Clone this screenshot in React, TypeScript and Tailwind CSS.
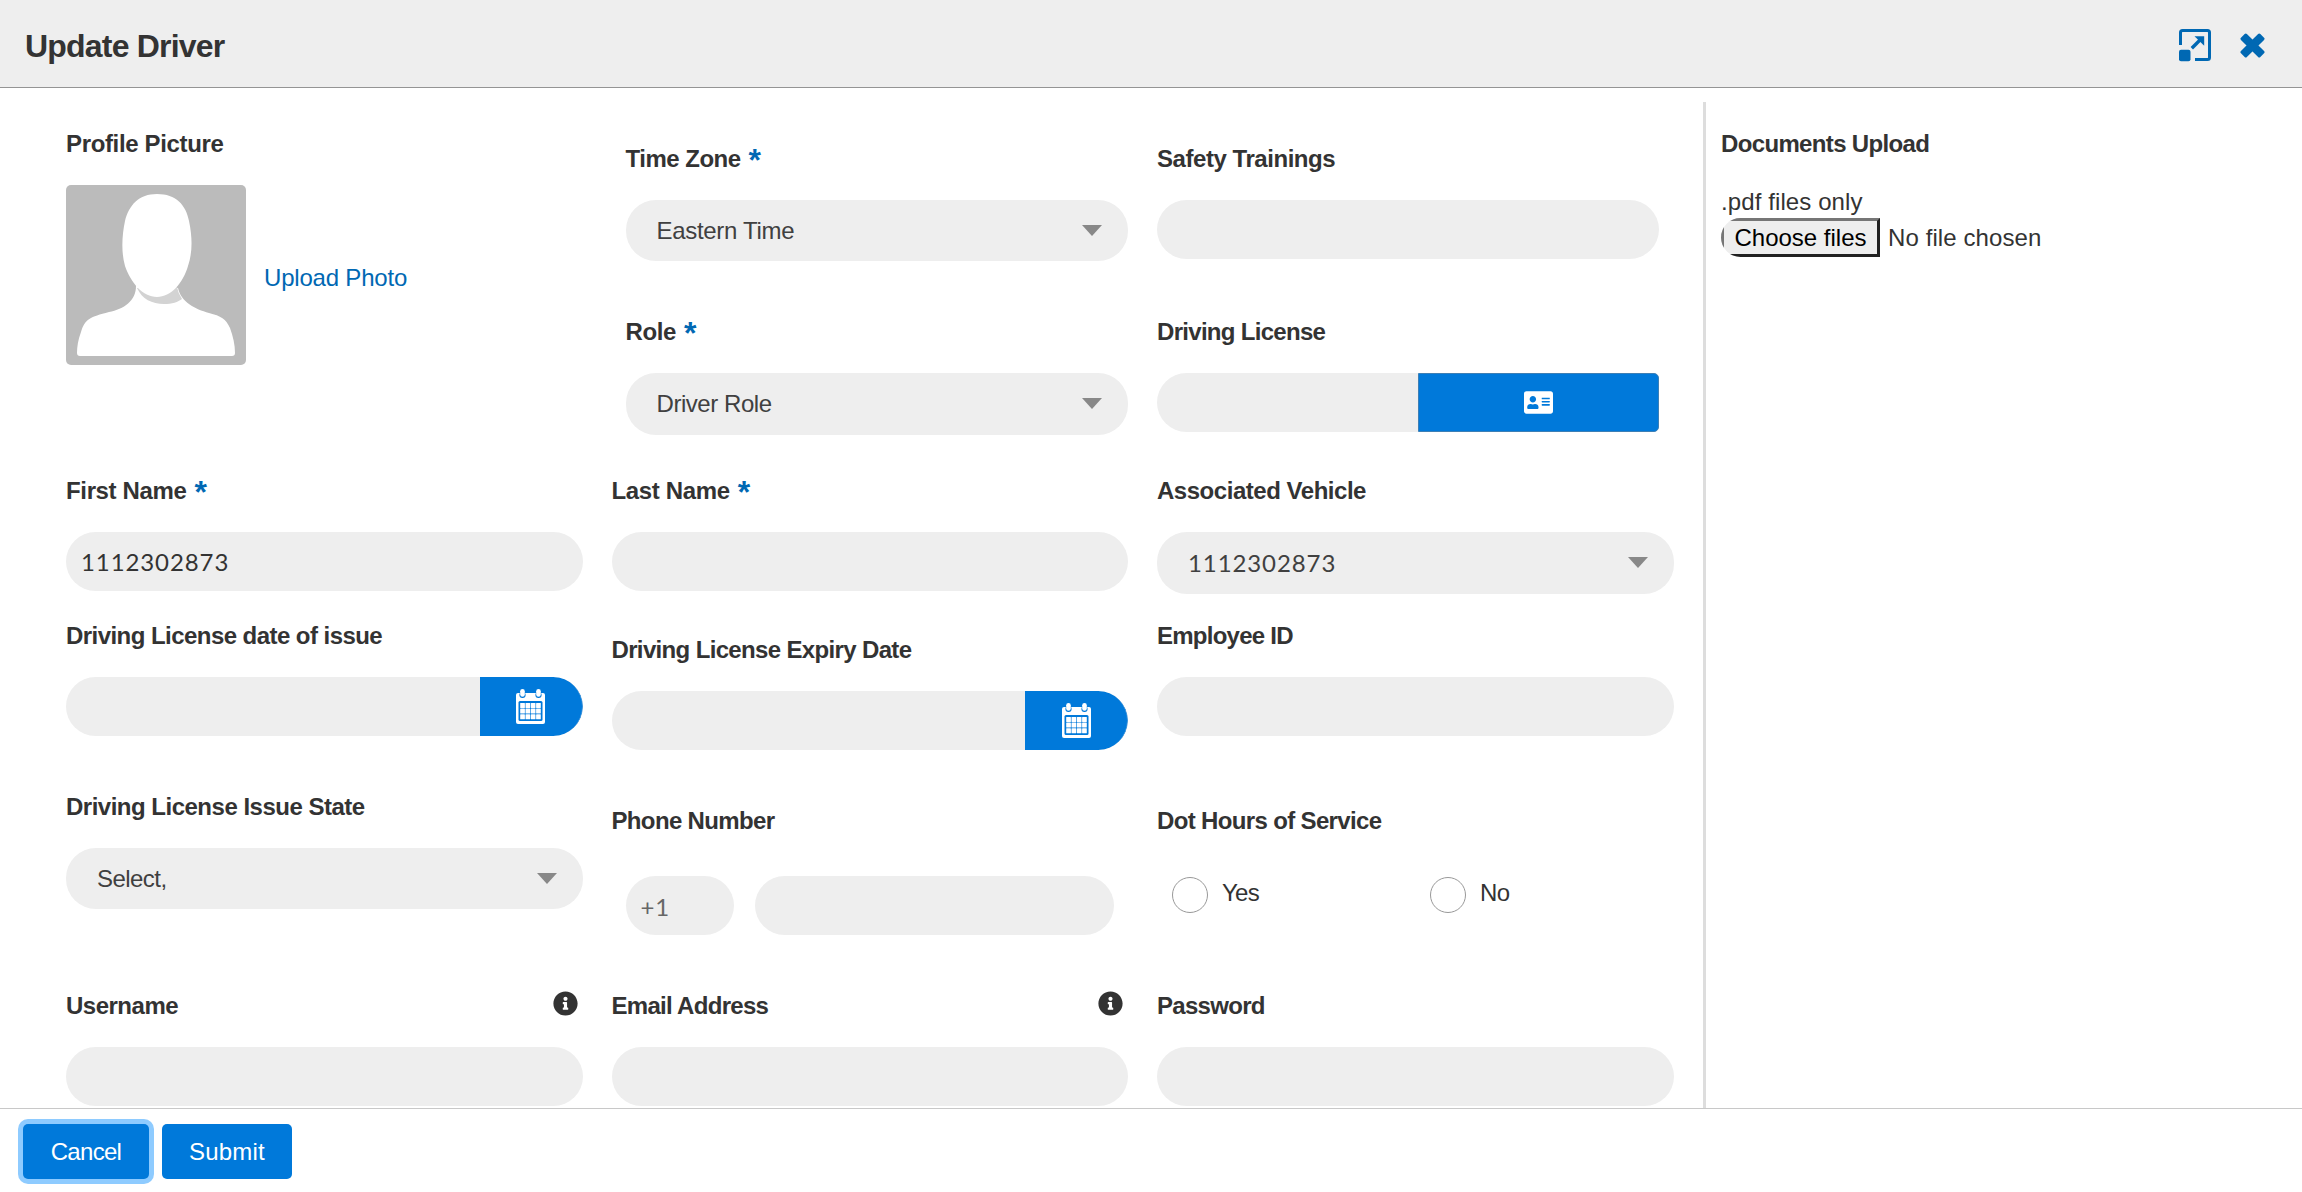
import type { ReactNode } from 'react'
import { FaAddressCard, FaInfoCircle } from 'react-icons/fa'

const inputClass = 'block w-full h-[59px] rounded-[30px] bg-[#eeeeee] px-[15px] text-[24px] text-[#333333] outline-none'

function Label({ children, required, tracking = 'tracking-[-0.35px]' }: { children: ReactNode, required?: boolean, tracking?: string }) {
    return (
        <label className={`block h-[30px] mb-[26px] text-[24px] leading-[30px] font-bold whitespace-nowrap ${tracking}`}>
            {children}
            {required && <span className="relative top-[4px] ml-[8px] text-[#0068b3] text-[32px] leading-[20px]">*</span>}
        </label>
    )
}

function Select({ value, className = 'h-[61px]', textClassName = 'tracking-[-0.55px]' }: { value: string, className?: string, textClassName?: string }) {
    return (
        <div className={`flex items-center justify-between rounded-[30px] bg-[#eeeeee] pl-[31px] pr-[26px] ${className}`}>
            <span className={`text-[24px] leading-[30px] text-[#404040] ${textClassName}`}>{value}</span>
            <svg className="mb-[1px]" width="20" height="11" viewBox="0 0 20 11"><path d="M0 0h20L10 11z" fill="#888888" /></svg>
        </div>
    )
}

function CalendarIcon() {
    return (
        <svg width="31" height="35" viewBox="0 0 31 35">
            <rect x="1" y="4" width="29" height="31" rx="2" fill="#fff" />
            <rect x="4.4" y="3" width="6.2" height="6" rx="3" fill="#0079da" />
            <rect x="20.4" y="3" width="6.2" height="6" rx="3" fill="#0079da" />
            <rect x="5.2" y="0" width="4.6" height="7.8" rx="2.3" fill="#fff" />
            <rect x="21.2" y="0" width="4.6" height="7.8" rx="2.3" fill="#fff" />
            <rect x="3.5" y="12" width="24" height="20" rx="1.5" fill="#0079da" />
            {[13.9, 19.6, 25.3].map((y) => [5.2, 10.5, 15.8, 21.1].map((x) => (
                <rect key={`${x}-${y}`} x={x} y={y} width="4.7" height="5" rx="0.5" fill="#fff" />
            )))}
        </svg>
    )
}

function DateInput() {
    return (
        <div className="flex h-[59px] rounded-[30px] overflow-hidden bg-[#eeeeee]">
            <input className="flex-1 min-w-0 bg-transparent px-4 outline-none" />
            <button className="w-[103px] rounded-r-[30px] bg-[#0079da] border-r border-[#3d93da] flex items-center justify-center">
                <CalendarIcon />
            </button>
        </div>
    )
}

function Radio({ label }: { label: string }) {
    return (
        <div className="flex w-[258px] shrink-0">
            <span className="w-9 h-9 rounded-full border border-[#999999] mr-[14px]"></span>
            <span className="text-[24px] leading-[30px] mt-[1px] tracking-[-0.7px]">{label}</span>
        </div>
    )
}

function Avatar() {
    return (
        <svg width="180" height="180" viewBox="0 0 180 180">
            <rect width="180" height="180" rx="5" fill="#bbbbbb" />
            <path d="M70 101C70 116 58 124 43 127C24 132 19 134 15 147C12 155 11 162 11 168Q11 171 14 171H166Q169 171 169 168C169 160 167 151 164 143C160 134 155 131 143 128C129 124 115 117 112 103Z" fill="#fff" />
            <path d="M71 103C76 114 86 119 98 119C106 119 112 117 116 114Q112 108 111 102Z" fill="#d3d3d3" />
            <path d="M91 9C110 9 120 20 123 36C127 55 126 69 122 81C117 98 105 112 91 112C77 112 65 98 59 81C55 67 56 50 59 36C63 20 73 9 91 9Z" fill="#fff" />
        </svg>
    )
}

function Header() {
    return (
        <div className="flex items-center h-[88px] shrink-0 bg-[#eeeeee] border-b border-[#949494] pl-[25px] pr-[37px]">
            <h1 className="flex-1 text-[32px] leading-[40px] mt-[4px] font-bold tracking-[-0.8px]">Update Driver</h1>
            <svg className="mt-[4px] mr-[28px]" width="33" height="33" viewBox="0 0 33 33">
                <path d="M1.5 16V3.5Q1.5 1.5 3.5 1.5H28.5Q30.5 1.5 30.5 3.5V28.5Q30.5 30.5 28.5 30.5H16" fill="none" stroke="#0068b3" strokeWidth="3" />
                <rect y="20.7" width="11.5" height="11.5" rx="2" fill="#0068b3" />
                <path d="M15.5 7.3H25.2V16.8Z" fill="#0068b3" />
                <path d="M12.8 19.2L22 10" stroke="#0068b3" strokeWidth="3.4" />
            </svg>
            <svg className="mt-[4px]" width="25" height="25" viewBox="0 0 25 25">
                <g fill="#0068b3">
                    <rect x="-1.2" y="8.3" width="27.4" height="8.4" rx="1.6" transform="rotate(45 12.5 12.5)" />
                    <rect x="-1.2" y="8.3" width="27.4" height="8.4" rx="1.6" transform="rotate(-45 12.5 12.5)" />
                </g>
            </svg>
        </div>
    )
}

export default function App() {
    return (
        <div className="flex flex-col w-full h-screen overflow-hidden bg-white text-[#333333] font-['Liberation_Sans',sans-serif]">
            <Header />

            <div className="flex flex-1 min-h-0 pt-[14px]">
                <div className="w-[1706px] shrink-0 border-r-[3px] border-[#dddddd] pl-[66px] pt-[27px] overflow-hidden">
                    <div className="grid grid-cols-[516.5px_516.5px_516.5px] grid-rows-[347px_145px_171px_199px_auto] gap-x-[29px]">
                        <div>
                            <Label>Profile Picture</Label>
                            <div className="flex items-center">
                                <Avatar />
                                <a className="ml-[18px] mt-[5px] text-[24px] leading-[30px] tracking-[-0.2px] text-[#0068b3]">Upload Photo</a>
                            </div>
                        </div>
                        <div className="pt-[15px] pl-[14px]">
                            <Label required tracking="tracking-[-0.5px]">Time Zone</Label>
                            <Select value="Eastern Time" textClassName="tracking-[-0.3px]" />
                            <div className="mt-[56px]">
                                <Label required>Role</Label>
                                <Select value="Driver Role" className="h-[62px]" textClassName="tracking-[-0.45px]" />
                            </div>
                        </div>
                        <div className="pt-[15px] pr-[15px]">
                            <Label tracking="tracking-[-0.45px]">Safety Trainings</Label>
                            <input className={inputClass} />
                            <div className="mt-[58px]">
                                <Label tracking="tracking-[-0.7px]">Driving License</Label>
                                <div className="flex h-[59px]">
                                    <input className="flex-1 min-w-0 rounded-l-[30px] bg-[#eeeeee] px-4 outline-none" />
                                    <button className="w-[241px] rounded-r-[5px] bg-[#0079da] border border-[#3d7fb5] text-white text-[29px] flex items-center justify-center">
                                        <FaAddressCard />
                                    </button>
                                </div>
                            </div>
                        </div>

                        <div>
                            <Label required>First Name</Label>
                            <input className={`${inputClass} font-[Lato] tracking-[0.9px]`} defaultValue="1112302873" />
                        </div>
                        <div>
                            <Label required>Last Name</Label>
                            <input className={inputClass} />
                        </div>
                        <div>
                            <Label tracking="tracking-[-0.47px]">Associated Vehicle</Label>
                            <Select value="1112302873" className="h-[62px]" textClassName="font-[Lato] tracking-[0.9px]" />
                        </div>

                        <div>
                            <Label tracking="tracking-[-0.55px]">Driving License date of issue</Label>
                            <DateInput />
                        </div>
                        <div className="pt-[14px]">
                            <Label tracking="tracking-[-0.65px]">Driving License Expiry Date</Label>
                            <DateInput />
                        </div>
                        <div>
                            <Label tracking="tracking-[-0.75px]">Employee ID</Label>
                            <input className={inputClass} />
                        </div>

                        <div>
                            <Label tracking="tracking-[-0.5px]">Driving License Issue State</Label>
                            <Select value="Select," />
                        </div>
                        <div className="pt-[14px]">
                            <Label tracking="tracking-[-0.65px]">Phone Number</Label>
                            <div className="flex gap-[21px] px-[14px] pt-[14px]">
                                <div className="w-[108px] h-[59px] rounded-[30px] bg-[#eeeeee] pl-[15px] pt-[2px] flex items-center text-[24px] font-[Lato] tracking-[0.9px] text-[#666666]">+1</div>
                                <input className="flex-1 min-w-0 h-[59px] rounded-[30px] bg-[#eeeeee] px-4 outline-none" />
                            </div>
                        </div>
                        <div className="pt-[14px]">
                            <Label tracking="tracking-[-0.65px]">Dot Hours of Service</Label>
                            <div className="flex pl-[15px] pt-[15px]">
                                <Radio label="Yes" />
                                <Radio label="No" />
                            </div>
                        </div>

                        <div>
                            <div className="flex justify-between pr-[5px]">
                                <Label tracking="tracking-[-0.5px]">Username</Label>
                                <FaInfoCircle className="text-[25px]" />
                            </div>
                            <input className={inputClass} />
                        </div>
                        <div>
                            <div className="flex justify-between pr-[5px]">
                                <Label tracking="tracking-[-0.7px]">Email Address</Label>
                                <FaInfoCircle className="text-[25px]" />
                            </div>
                            <input className={inputClass} />
                        </div>
                        <div>
                            <Label tracking="tracking-[-0.7px]">Password</Label>
                            <input className={inputClass} />
                        </div>
                    </div>
                </div>

                <div className="pl-[15px] pt-[27px]">
                    <Label tracking="tracking-[-0.65px]">Documents Upload</Label>
                    <div className="mt-[28px] text-[24px] leading-[30px] tracking-[0.1px]">.pdf files only</div>
                    <div className="flex items-center mt-[1px] text-[24px] tracking-[0.1px]">
                        <div className="mr-2 rounded-l-[22px] overflow-hidden">
                            <button className="block w-[159px] h-[39px] bg-[#eeeeee] border-[3px] border-t-[#767676] border-l-[#767676] border-r-[#212121] border-b-[#212121] text-black leading-[30px] tracking-[0px] whitespace-nowrap">Choose files</button>
                        </div>
                        <span>No file chosen</span>
                    </div>
                </div>
            </div>

            <div className="flex gap-[13px] h-[84px] shrink-0 border-t border-[#c8c8c8] pl-[23px] pt-[15px] text-[24px] text-white">
                <button className="w-[126px] h-[55px] rounded-[5px] bg-[#0079da] ring-[5px] ring-[#8ecbff] tracking-[-0.7px]">Cancel</button>
                <button className="w-[130px] h-[55px] rounded-[5px] bg-[#0079da] tracking-[0.2px]">Submit</button>
            </div>
        </div>
    )
}
